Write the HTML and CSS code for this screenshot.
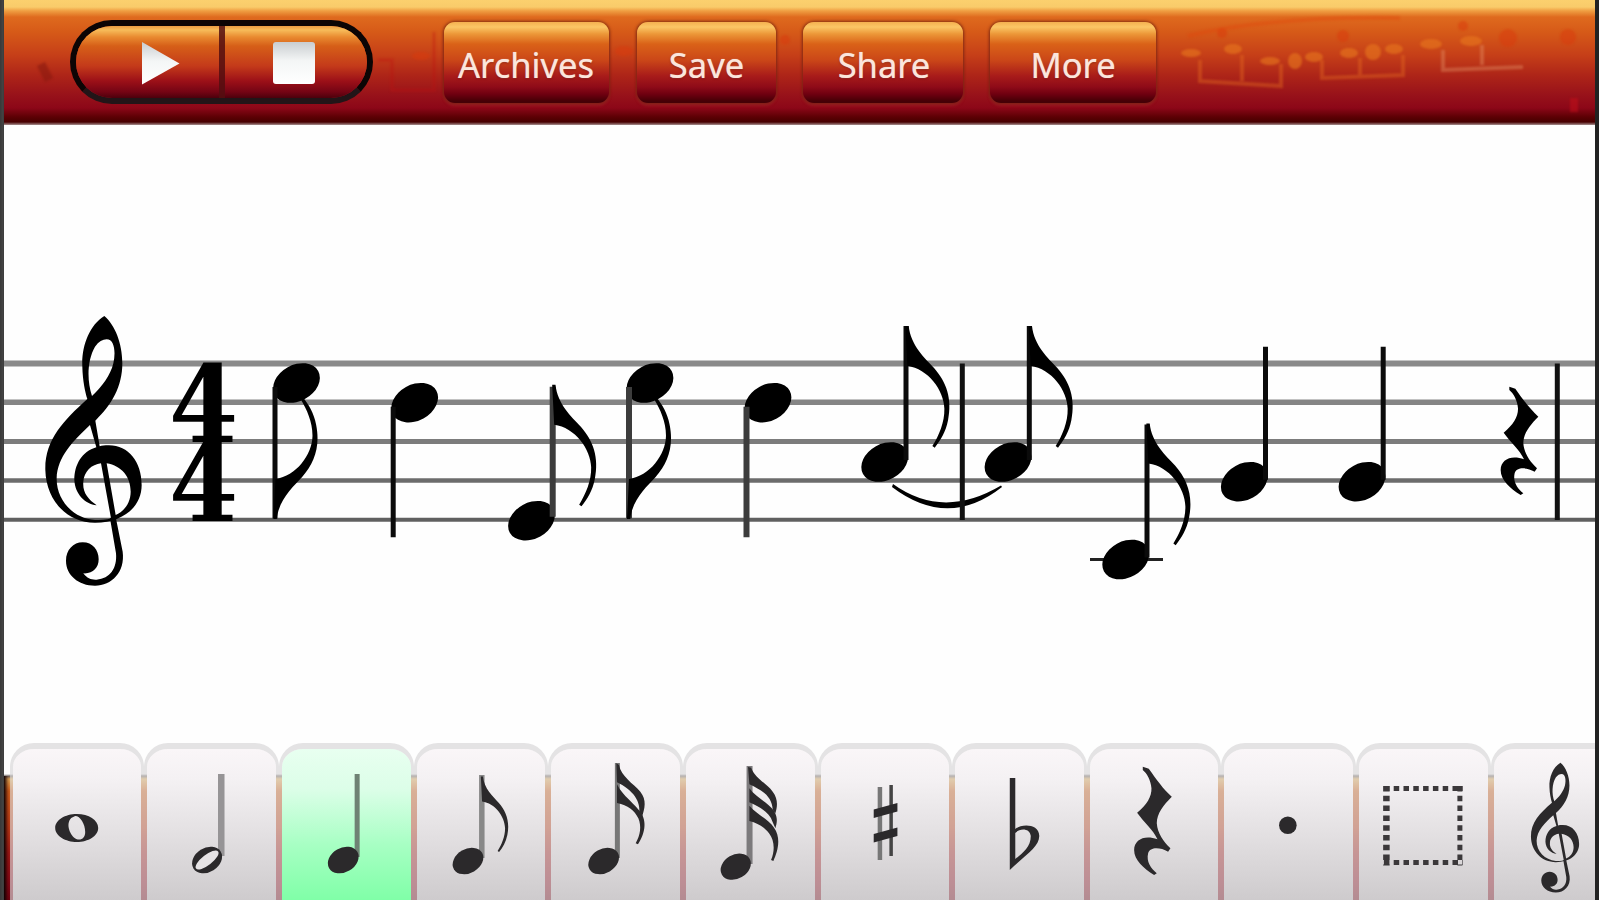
FILE: index.html
```html
<!DOCTYPE html>
<html lang="en">
<head>
<meta charset="utf-8">
<title>Score editor</title>
<link rel="stylesheet" href="styles.css">
</head>
<body>
<svg class="defs" width="0" height="0" aria-hidden="true">
  <defs>
    <path id="clef" fill-rule="evenodd" d="M313 48C268 75 244 140 247 200C248 240 255 275 262 297C190 362 134 420 136 510C138 600 200 668 285 668C370 668 425 620 425 555C425 485 385 435 325 436C315 436 305 437 299 439L286 362C335 315 367 260 367 190C367 130 345 75 313 48ZM320 118C343 118 348 155 340 190C332 225 305 262 276 288C260 240 262 180 285 140C296 125 308 118 320 118ZM270 375L289 442C245 455 223 495 223 540C225 582 255 612 290 616C264 598 247 578 250 545C252 515 275 493 303 490L333 655C320 660 300 660 285 660C220 656 169 600 170 535C172 470 220 422 270 375ZM320 490C365 498 392 530 392 575C392 610 370 636 347 645Z"/>
    <path id="clef-tail" d="M346 646L368 755C376 816 335 857 285 857C235 857 198 825 198 782C198 750 220 727 248 727C278 727 296 750 296 778C296 804 278 822 250 820C262 836 275 840 290 839C330 836 352 805 348 760L330 655Z"/>
    <path id="flag" d="M62-408L72-408C78-350 120-312 148-282C185-240 203-190 190-125C183-90 168-65 150-43L143-48C163-80 180-120 179-160C178-215 130-280 68-288Z"/>
    <path id="rest" d="M1288 170L1306 176C1328 207 1350 238 1375 260C1350 285 1330 310 1330 340C1332 370 1350 395 1371 415L1364 425C1340 412 1310 410 1304 430C1298 455 1312 475 1330 490L1322 495C1290 475 1262 450 1262 420C1262 388 1295 373 1332 388C1320 360 1290 335 1271 308C1300 285 1315 260 1314 235C1312 210 1300 190 1288 180Z"/>
    <ellipse id="head" rx="24.8" ry="18" transform="rotate(-29)"/>
    <linearGradient id="silver" x1="0" y1="0" x2="0" y2="1">
      <stop offset="0" stop-color="#c9cdd0"/><stop offset=".45" stop-color="#f4f6f6"/><stop offset="1" stop-color="#fff"/>
    </linearGradient>
  </defs>
</svg>

<div class="app">
  <header class="toolbar">
    <svg class="ornament" viewBox="0 0 1599 125" aria-hidden="true">
      <g fill="none" stroke="#e0671f" stroke-width="4" opacity=".45">
        <path d="M1200 60v21l81 5v-22M1242 55v26"/>
        <path d="M1322 60v18l81-3V55M1360 58v17"/>
        <path stroke="#e08a60" d="M1443 50v20l80-3M1482 45v20"/>
      </g>
      <g fill="#e8791f" opacity=".6">
        <ellipse cx="1191" cy="53" rx="10" ry="4"/><ellipse cx="1233" cy="49" rx="9" ry="5"/>
        <ellipse cx="1270" cy="61" rx="10" ry="4"/><ellipse cx="1295" cy="61" rx="7" ry="8"/>
        <ellipse cx="1314" cy="57" rx="9" ry="5"/><ellipse cx="1349" cy="53" rx="9" ry="5"/>
        <ellipse cx="1373" cy="52" rx="8" ry="8"/><ellipse cx="1394" cy="49" rx="9" ry="5"/>
        <ellipse cx="1431" cy="44" rx="11" ry="5"/><ellipse cx="1471" cy="41" rx="11" ry="5"/>
      </g>
      <g fill="#d93a0c" opacity=".5">
        <circle cx="1222" cy="33" r="5"/><circle cx="1343" cy="36" r="6"/><circle cx="1463" cy="26" r="5"/>
        <circle cx="1508" cy="38" r="9"/><circle cx="1568" cy="37" r="8"/><circle cx="785" cy="40" r="5"/>
        <ellipse cx="624" cy="51" rx="9" ry="5"/><ellipse cx="421" cy="56" rx="9" ry="4"/>
      </g>
      <path d="M1574 98v14" stroke="#c8101a" stroke-width="8" opacity=".5"/>
      <path d="M41 64l8 16" stroke="#8a1a10" stroke-width="9" opacity=".6"/>
      <path d="M378 60h14v30h44M434 32v56" fill="none" stroke="#c01010" stroke-width="3" opacity=".35"/>
      <path d="M1188 36Q1270 16 1400 18" fill="none" stroke="#e0450c" stroke-width="4" opacity=".4"/>
    </svg>
    <div class="transport">
      <button class="transport-key play" aria-label="Play">
        <svg width="40" height="44" viewBox="0 0 40 44"><path d="M1 1L38.500 22.500L1 43.500Z" fill="url(#silver)"/></svg>
      </button>
      <button class="transport-key stop" aria-label="Stop">
        <svg width="42" height="42" viewBox="0 0 42 42"><rect width="42" height="42" rx="3" fill="url(#silver)"/></svg>
      </button>
    </div>
    <nav class="menu">
      <button class="menu-key archives"><span>Archives</span></button>
      <button class="menu-key save"><span>Save</span></button>
      <button class="menu-key share"><span>Share</span></button>
      <button class="menu-key more"><span>More</span></button>
    </nav>
  </header>

  <main class="score">
    <svg viewBox="4 125 1591 618" width="1591" height="618">
      <g class="staff">
        <path stroke="#8a8a8a" stroke-width="6" d="M4 363.500H1595"/>
        <path stroke="#858585" stroke-width="5.500" d="M4 402.300H1595"/>
        <path stroke="#7c7c7c" stroke-width="5" d="M4 441.500H1595"/>
        <path stroke="#6c6c6c" stroke-width="4.500" d="M4 480.500H1595"/>
        <path stroke="#606060" stroke-width="4" d="M4 519.800H1595"/>
      </g>
      <g transform="translate(0 300) scale(.33333)"><use href="#clef"/><use href="#clef-tail"/></g>
      <text class="meter" transform="translate(169 441.500) scale(.93 1)">4</text>
      <text class="meter" transform="translate(169 520.500) scale(.93 1)">4</text>

      <g transform="translate(296.500 383)"><use href="#head"/><path class="stem" d="M-21.500 4V135.500"/><use href="#flag" transform="translate(-43.700 0) scale(.33333 -.33333)"/></g>
      <g transform="translate(414.700 402.700)"><use href="#head"/><path class="stem" d="M-21.500 4V134.500"/></g>
      <g transform="translate(531.500 520.700)"><use href="#head"/><path class="stem soft" d="M21.200 -4V-134"/><use href="#flag" transform="scale(.33333)"/></g>
      <g transform="translate(650 383)"><use href="#head"/><path class="stem soft" d="M-21 4V135.500"/><use href="#flag" transform="translate(-43.700 0) scale(.33333 -.33333)"/></g>
      <g transform="translate(768 402.700)"><use href="#head"/><path class="stem soft" d="M-21.500 4V134.500"/></g>
      <g transform="translate(884.700 462)"><use href="#head"/><path class="stem" d="M21.300 -2V-136"/><use href="#flag" transform="scale(.33333)"/></g>
      <g transform="translate(1008 462)"><use href="#head"/><path class="stem" d="M21.300 -2V-136"/><use href="#flag" transform="scale(.33333)"/></g>
      <path d="M893 484Q943 520 1001 485.500L1002 487Q948 529.500 892 487Z"/>
      <path d="M962.300 363.500V520" stroke="#111" stroke-width="5"/>
      <path d="M1090 559.500H1163" stroke="#222" stroke-width="3"/>
      <g transform="translate(1125.700 559.500)"><use href="#head"/><path class="stem" d="M21.300 -2V-135"/><use href="#flag" transform="scale(.33333)"/></g>
      <g transform="translate(1244.300 481.700)"><use href="#head"/><path class="stem" d="M21.200 -2V-135"/></g>
      <g transform="translate(1362 481.700)"><use href="#head"/><path class="stem" d="M21.200 -2V-135"/></g>
      <use href="#rest" transform="translate(1080 330) scale(.33333)"/>
      <path d="M1557.300 363.500V520" stroke="#111" stroke-width="5"/>
    </svg>
  </main>

  <footer class="palette">
    <button class="tab" aria-label="Whole note"><svg viewBox="9.800 743 134.630 157"><path fill-rule="evenodd" d="M55 828C55 820 65 814 76.700 814S98 820 98 828S88 842 76.700 842S55 836 55 828ZM71 818C65 824 70 836 76 839C81 841 85 838 85 832C85 824 80 816 75 816Z"/></svg></button>
    <button class="tab" aria-label="Half note"><svg viewBox="144.430 743 134.630 157"><path d="M221.700 774V856" stroke="#969496" stroke-width="6.500"/><ellipse cx="207.500" cy="860" rx="16" ry="12" transform="rotate(-32 207.500 860)"/><ellipse class="hollow" cx="207.500" cy="860" rx="14" ry="5.200" transform="rotate(-38 207.500 860)"/></svg></button>
    <button class="tab selected" aria-label="Quarter note"><svg viewBox="279.060 743 134.630 157"><path d="M357.200 774V857" stroke="#6f8274" stroke-width="5"/><ellipse cx="343.300" cy="860" rx="16.300" ry="12.200" transform="rotate(-30 343.300 860)"/></svg></button>
    <button class="tab" aria-label="Eighth note"><svg viewBox="413.690 743 134.630 157"><path d="M481.500 775V858" stroke="#888" stroke-width="5.500"/><g transform="translate(467.700 861)"><ellipse rx="16.300" ry="12" transform="rotate(-30)"/><use href="#flag" transform="scale(.207)"/></g></svg></button>
    <button class="tab" aria-label="Sixteenth note"><svg viewBox="548.320 743 134.630 157"><path d="M617.700 763V858" stroke="#777" stroke-width="5"/><ellipse cx="604" cy="861" rx="16.300" ry="12" transform="rotate(-30 604 861)"/><g transform="translate(400 735) scale(.33333)"><path d="M650 85L658 90C665 125 700 145 722 170C742 195 735 220 727 245L718 238C725 200 700 165 652 142Z"/><path d="M652 148C670 185 705 205 725 235C745 268 730 305 715 328L708 325C722 300 726 275 716 250C704 225 685 212 652 204Z"/></g></svg></button>
    <button class="tab" aria-label="Thirty-second note"><svg viewBox="682.950 743 134.630 157"><path d="M749.500 766V864" stroke="#7c7a7c" stroke-width="6"/><ellipse cx="735.700" cy="866.700" rx="16" ry="12" transform="rotate(-30 735.700 866.700)"/><g transform="translate(400 735) scale(.33333)"><path d="M1044 96L1053 98C1065 130 1100 145 1118 170C1135 192 1132 215 1126 235L1118 225C1116 185 1090 168 1048 148Z"/><path d="M1048 160C1070 190 1105 203 1122 228C1135 250 1130 265 1126 280L1118 262C1108 232 1085 220 1048 202Z"/><path d="M1048 212C1070 238 1105 252 1122 278C1145 310 1132 352 1120 378L1113 375C1126 345 1122 315 1108 296C1092 276 1075 265 1048 258Z"/></g></svg></button>
    <button class="tab" aria-label="Sharp"><svg viewBox="817.580 743 134.630 157"><path d="M879.500 787V860" stroke="#777" stroke-width="4.500"/><path d="M890.700 785V856" stroke="#444" stroke-width="3.500"/><path d="M873.300 809.500L897 803V811.500L873.300 818ZM873.300 834L897 827.500V836L873.300 842.500Z"/></svg></button>
    <button class="tab" aria-label="Flat"><svg viewBox="952.210 743 134.630 157"><path fill-rule="evenodd" d="M1010 778H1015.500V829C1021 824 1039 823 1039.500 836C1039 847 1028 853 1010 870ZM1015.500 833V859C1023 853 1031 847 1031 836C1030 828 1020 828 1015.500 833Z"/></svg></button>
    <button class="tab" aria-label="Rest"><svg viewBox="1086.840 743 134.630 157"><use href="#rest" transform="translate(713.300 710) scale(.33333)"/></svg></button>
    <button class="tab" aria-label="Dot"><svg viewBox="1221.470 743 134.630 157"><circle cx="1288.300" cy="825.200" r="8.800"/></svg></button>
    <button class="tab" aria-label="Selection"><svg viewBox="1356.100 743 134.630 157"><g fill="none" stroke="#3b383a" stroke-dasharray="5.500 4.300"><path d="M1384 788.500H1463M1384 862.500H1463" stroke-width="5"/><path d="M1386.500 786V865.500" stroke-width="6.500"/><path d="M1460 786V865.500" stroke-width="5"/></g></svg></button>
    <button class="tab" aria-label="Clef"><svg viewBox="1490.730 743 134.630 157"><g transform="translate(1508 755) scale(.1667 .1605)"><use href="#clef"/><use href="#clef-tail"/></g></svg></button>
  </footer>
</div>
</body>
</html>
```
FILE: styles.css
```css
* { box-sizing: border-box; }

body {
  margin: 0;
  width: 1599px;
  height: 900px;
  overflow: hidden;
  background: #222;
  font-family: "Noto Sans", "Liberation Sans", sans-serif;
}

button {
  margin: 0;
  padding: 0;
  border: 0;
  font: inherit;
  background: none;
}

.defs { display: block; }

.app {
  display: grid;
  grid-template-rows: 125px 618px 157px;
  width: 1599px;
  height: 900px;
  padding: 0 4px;
  background: linear-gradient(90deg, #383838, #444 3px, #383838 4px, #222 5px);
}

.toolbar {
  position: relative;
  display: flex;
  align-items: flex-start;
  padding: 20px 0 0 66px;
  background: linear-gradient(#fbd06e 0, #f9cb6a 7px, #ef9d41 11px, #df6a1e 17px, #d65a18 32px, #c63f18 55px, #ad2418 76px, #98121a 95px, #8c0718 108px, #5c0004 117px, #470000 122px, #a89090 125px);
}

.ornament {
  position: absolute;
  left: -4px;
  top: 0;
  width: 1599px;
  height: 125px;
  filter: blur(1.3px);
}

.transport {
  position: relative;
  display: flex;
  width: 303px;
  height: 84px;
  border: 6px solid #0c0505;
  border-bottom-color: #221518;
  border-radius: 42px;
  overflow: hidden;
}

.transport-key {
  display: flex;
  align-items: flex-start;
  background: linear-gradient(#e99a42 0, #f7bc5a 4px, #e98a30 11px, #d65f18 20px, #c43a1a 40px, #9c1018 55px, #740414 66px, #4c000c 72px);
}

.play {
  width: 149px;
  padding: 15px 0 0 65px;
  border-right: 6px solid rgba(84, 14, 16, .85);
}

.stop {
  width: 142px;
  padding: 16px 0 0 48px;
}

.menu {
  position: relative;
  display: flex;
  margin: 2px 0 0 70.5px;
}

.menu-key {
  height: 81px;
  color: #fbe6dc;
  font-size: 34.5px;
  line-height: 85px;
  border-radius: 11px;
  background: linear-gradient(#f4b050 0, #fbc766 5px, #ec9738 12px, #da6218 22px, #cb4718 38px, #a81b1a 54px, #8e0b18 65px, #700010 72px, #460006 79px);
  box-shadow: 0 0 3px 1px rgba(110, 35, 15, .8), 0 3px 3px rgba(190, 60, 60, .35);
}

.menu-key span {
  display: inline-block;
  height: 81px;
  text-shadow: 0 0 1px rgba(251, 230, 220, .7), 0 1px 2px rgba(90, 10, 10, .5);
}

.archives { width: 165px; }
.save { width: 139px; margin-left: 28.5px; }
.share { width: 160px; margin-left: 26.5px; padding-left: 3px; }
.more { width: 166px; margin-left: 27.5px; }

.score { background: #fefefe; }
.score svg { display: block; }

.meter {
  font: bold 107px "DejaVu Serif", serif;
}

.stem { stroke: #0b0b0b; stroke-width: 5; }
.stem.soft { stroke: #3c3c3c; stroke-width: 6; }

.palette {
  display: flex;
  overflow: hidden;
  padding-left: 5.8px;
  background:
    linear-gradient(90deg, #100000 0, rgba(60, 0, 0, .3) 4px, transparent 7px) 0 33px no-repeat,
    linear-gradient(#fefefe 0, #fefefe 31px, #77706c 33px, #f3bd61 36px, #ed9a42 41px, #df6a1e 48px, #c63f18 85px, #a81b18 110px, #8c0718 140px, #700010 157px);
}

.tab {
  display: flex;
  align-items: flex-start;
  justify-content: flex-start;
  flex: 0 0 134.63px;
  min-width: 0;
  height: 165px;
  margin-bottom: -8px;
  border: 3px solid rgba(214, 213, 214, .66);
  border-top-width: 6px;
  border-radius: 24px 24px 0 0;
  background: linear-gradient(#faf6f8 0, #f4f1f3 30px, #e3e0e2 85px, #cecbcd 151px) padding-box;
}

.tab.selected {
  background: linear-gradient(#e8fff0 0, #dcfee8 40px, #a8ffc4 95px, #80ffa8 151px) padding-box;
}

.tab svg {
  display: block;
  flex: none;
  width: 134.63px;
  height: 157px;
  margin: -6px 0 0 -3px;
  fill: #2b292b;
}

.tab .hollow { fill: #e6e3e5; }
```
